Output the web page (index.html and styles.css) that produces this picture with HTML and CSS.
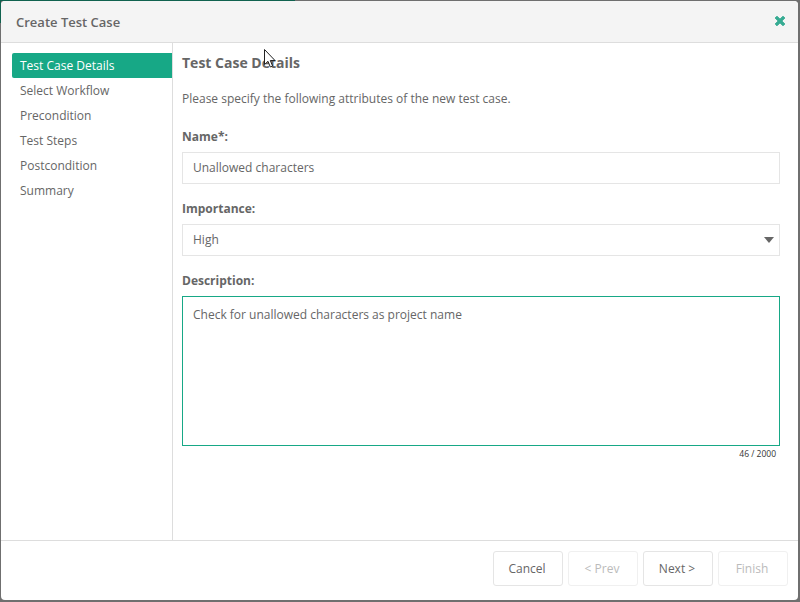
FILE: index.html
```html
<!DOCTYPE html>
<html lang="en">
<head>
  <meta charset="UTF-8">
  <title>Create Test Case</title>
  <link rel="stylesheet" href="styles.css">
</head>
<body>

<div class="dialog">
  <div class="dialog-header">
    <span class="dialog-title">Create Test Case</span>
    <svg class="close-icon" width="12" height="12" viewBox="0 0 12 12">
      <path d="M1.2 3 L3 1.2 L6 4.2 L9 1.2 L10.8 3 L7.8 6 L10.8 9 L9 10.8 L6 7.8 L3 10.8 L1.2 9 L4.2 6 Z" fill="#35ab92" stroke="#35ab92" stroke-width="1" stroke-linejoin="round"/>
    </svg>
  </div>

  <div class="dialog-body">
    <ul class="steps">
      <li class="step active">Test Case Details</li>
      <li class="step">Select Workflow</li>
      <li class="step">Precondition</li>
      <li class="step">Test Steps</li>
      <li class="step">Postcondition</li>
      <li class="step">Summary</li>
    </ul>

    <div class="content">
      <h3 class="content-title">Test Case Details</h3>
      <p class="intro">Please specify the following attributes of the new test case.</p>

      <label class="field-label">Name*:</label>
      <div class="input">Unallowed characters</div>

      <label class="field-label">Importance:</label>
      <div class="input select">
        High
        <span class="caret"></span>
      </div>

      <label class="field-label">Description:</label>
      <div class="input textarea">Check for unallowed characters as project name</div>
      <div class="counter">46 / 2000</div>
    </div>
  </div>

  <div class="dialog-footer">
    <button class="btn">Cancel</button>
    <button class="btn disabled">&lt; Prev</button>
    <button class="btn">Next &gt;</button>
    <button class="btn disabled">Finish</button>
  </div>
</div>

<svg class="cursor" width="13" height="20" viewBox="0 0 13 20">
  <path d="M0.5 0.5 L0.5 15.5 L4 12.3 L6.3 18 L8.6 17 L6.3 11.5 L11 11.5 Z" fill="#fff" stroke="#222" stroke-width="1"/>
</svg>

</body>
</html>
```

FILE: styles.css
```css
* {
  box-sizing: border-box;
}

body {
  margin: 0;
  height: 602px;
  padding: 1px 2px 2px 1px;
  overflow: hidden;
  /* the page behind the dialog only shows along the top and left edge */
  background:
    linear-gradient(#10624f, #10624f) 0 0 / 295px 1px no-repeat,
    linear-gradient(#10624f, #10624f) 0 0 / 1px 23px no-repeat,
    #6f6f6f;
  font-family: "Open Sans", sans-serif;
  font-size: 12px;
  color: #666;
}

.dialog {
  display: flex;
  flex-direction: column;
  height: 100%;
  background-color: #fff;
  border-radius: 4px;
}

.dialog-header {
  display: flex;
  align-items: center;
  justify-content: space-between;
  height: 42px;
  padding: 0 12px 0 15px;
  background-color: #f4f4f4;
  border-bottom: 1px solid #ddd;
  border-radius: 4px 4px 0 0;
}

.dialog-title {
  font-size: 13px;
  font-weight: 600;
  color: #666;
}

.close-icon {
  margin-bottom: 1px;
}

.dialog-body {
  display: flex;
  flex: 1;
  min-height: 0;
}

.steps {
  width: 172px;
  margin: 0;
  padding: 10px 0 0 11px;
  list-style: none;
  border-right: 1px solid #ddd;
}

.step {
  height: 25px;
  padding-left: 8px;
  line-height: 25px;
  font-size: 12px;
  color: #666;
}

.step.active {
  background-color: #17a886;
  color: #fff;
  border-radius: 2px 0 0 2px;
}

.content {
  flex: 1;
  padding: 9px 18px 0 9px;
}

.content-title {
  margin: 0 0 17px;
  font-size: 14px;
  font-weight: 700;
  line-height: 21px;
  color: #666;
}

.intro {
  margin: 0 0 20px;
  line-height: 18px;
}

.field-label {
  display: block;
  margin-bottom: 6px;
  line-height: 18px;
  font-size: 12px;
  font-weight: 700;
}

.input {
  position: relative;
  height: 32px;
  margin-bottom: 16px;
  padding: 0 10px;
  line-height: 29px;
  background-color: #fff;
  border: 1px solid #e5e5e5;
}

.caret {
  position: absolute;
  top: 12px;
  right: 5px;
  border-top: 6px solid #666;
  border-left: 5px solid transparent;
  border-right: 5px solid transparent;
}

.textarea {
  height: 150px;
  margin-bottom: 0;
  padding-top: 3px;
  border-color: #17a886;
}

.counter {
  margin-top: 1px;
  padding-right: 4px;
  text-align: right;
  font-size: 8.5px;
  line-height: 13px;
  color: #333;
}

.dialog-footer {
  display: flex;
  justify-content: flex-end;
  gap: 5px;
  height: 60px;
  padding: 10px 10px 0 0;
  border-top: 1px solid #ddd;
}

.btn {
  width: 70px;
  height: 35px;
  padding: 0 2px 0 0;
  font-family: inherit;
  font-size: 12px;
  color: #666;
  background-color: #fff;
  border: 1px solid #e5e5e5;
  border-radius: 3px;
}

.btn.disabled {
  color: #bbb;
  border-color: #f0f0f0;
}

.cursor {
  position: absolute;
  top: 49px;
  left: 264px;
}
```
